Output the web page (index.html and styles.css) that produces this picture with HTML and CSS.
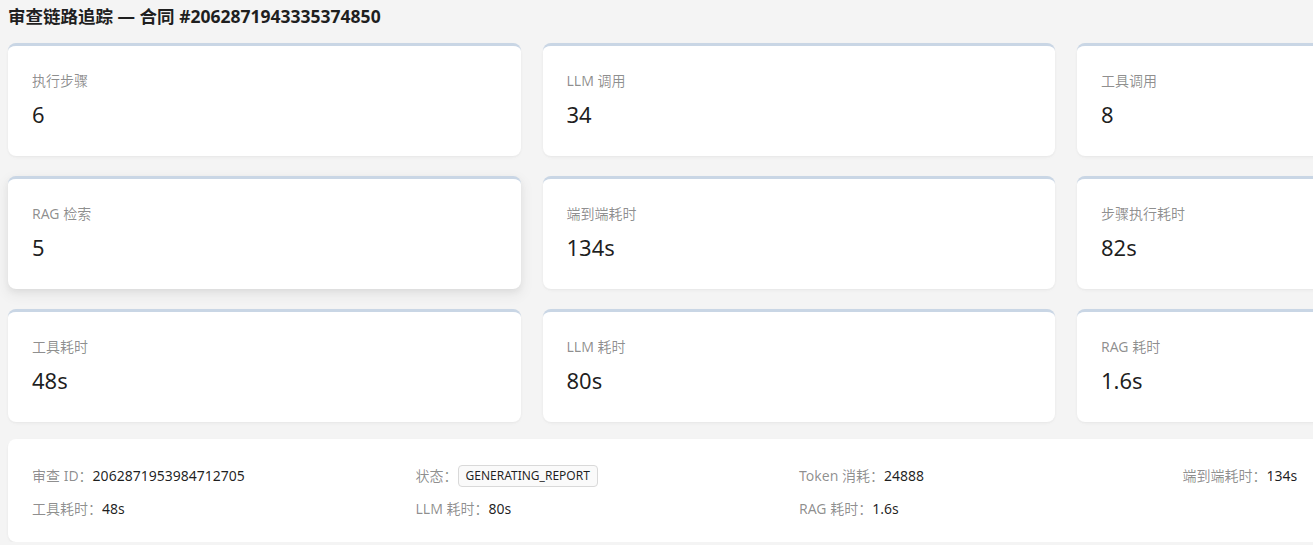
FILE: index.html
```html
<!DOCTYPE html>
<html lang="zh-CN">
<head>
    <meta charset="UTF-8">
    <title>审查链路追踪</title>
    <link rel="stylesheet" href="styles.css">
</head>
<body>
   <div id="page">
       <h1 class="page-title">审查链路追踪 — 合同 #2062871943335374850</h1>

       <div class="stat-grid">
           <div class="stat-card">
               <div class="stat-title">执行步骤</div>
               <div class="stat-value">6</div>
           </div>
           <div class="stat-card">
               <div class="stat-title">LLM 调用</div>
               <div class="stat-value">34</div>
           </div>
           <div class="stat-card">
               <div class="stat-title">工具调用</div>
               <div class="stat-value">8</div>
           </div>
           <div class="stat-card hover">
               <div class="stat-title">RAG 检索</div>
               <div class="stat-value">5</div>
           </div>
           <div class="stat-card">
               <div class="stat-title">端到端耗时</div>
               <div class="stat-value">134s</div>
           </div>
           <div class="stat-card">
               <div class="stat-title">步骤执行耗时</div>
               <div class="stat-value">82s</div>
           </div>
           <div class="stat-card">
               <div class="stat-title">工具耗时</div>
               <div class="stat-value">48s</div>
           </div>
           <div class="stat-card">
               <div class="stat-title">LLM 耗时</div>
               <div class="stat-value">80s</div>
           </div>
           <div class="stat-card">
               <div class="stat-title">RAG 耗时</div>
               <div class="stat-value">1.6s</div>
           </div>
       </div>

       <div class="detail-card">
           <ul class="desc">
               <li><span class="desc-label">审查 ID：</span><span class="desc-value">2062871953984712705</span></li>
               <li><span class="desc-label">状态：</span><span class="tag">GENERATING_REPORT</span></li>
               <li><span class="desc-label">Token 消耗：</span><span class="desc-value">24888</span></li>
               <li><span class="desc-label">端到端耗时：</span><span class="desc-value">134s</span></li>
               <li><span class="desc-label">工具耗时：</span><span class="desc-value">48s</span></li>
               <li><span class="desc-label">LLM 耗时：</span><span class="desc-value">80s</span></li>
               <li><span class="desc-label">RAG 耗时：</span><span class="desc-value">1.6s</span></li>
           </ul>
       </div>
   </div>
</body>
</html>
```

FILE: styles.css
```css
*{
    padding: 0;
    margin: 0;
    box-sizing: border-box;
}
ul{
    list-style: none;
}
html, body{
    background: #f4f4f4;
    overflow: hidden;
}
body{
    font-family: "Noto Sans", "Noto Sans CJK SC", sans-serif;
    color: rgba(0, 0, 0, 0.88);
    font-size: 14px;
}
#page{
    width: 1600px;
    padding: 4px 8px 0 8px;
}
.page-title{
    font-size: 17.5px;
    font-weight: 700;
    line-height: 24px;
    margin-bottom: 15px;
    color: #1f1f1f;
}
.stat-grid{
    display: grid;
    grid-template-columns: repeat(3, 512.5px);
    column-gap: 22px;
    row-gap: 20px;
}
.stat-card{
    height: 113px;
    background: #ffffff;
    border-top: 3px solid #c9d6e5;
    border-radius: 8px;
    padding: 24px;
    box-shadow: 0 1px 2px 0 rgba(0, 0, 0, 0.03), 0 1px 6px -1px rgba(0, 0, 0, 0.02), 0 2px 4px 0 rgba(0, 0, 0, 0.02);
}
.stat-card.hover{
    box-shadow: 0 1px 2px -2px rgba(0, 0, 0, 0.10), 0 3px 6px 0 rgba(0, 0, 0, 0.06), 0 5px 12px 4px rgba(0, 0, 0, 0.04);
}
.stat-title{
    font-size: 14px;
    line-height: 22px;
    color: rgba(0, 0, 0, 0.45);
    margin-bottom: 4px;
}
.stat-value{
    font-size: 22px;
    line-height: 36px;
    color: rgba(0, 0, 0, 0.88);
}
.detail-card{
    width: 1582px;
    margin-top: 17px;
    background: #ffffff;
    border-radius: 8px;
    padding: 26px 24px 22px 24px;
    box-shadow: 0 1px 2px 0 rgba(0, 0, 0, 0.03), 0 1px 6px -1px rgba(0, 0, 0, 0.02), 0 2px 4px 0 rgba(0, 0, 0, 0.02);
}
.desc{
    display: grid;
    grid-template-columns: repeat(4, 1fr);
    row-gap: 11px;
}
.desc li{
    display: flex;
    align-items: center;
    height: 22px;
    line-height: 22px;
}
.desc-label{
    color: rgba(0, 0, 0, 0.45);
}
.desc-value{
    color: rgba(0, 0, 0, 0.88);
}
.tag{
    display: inline-block;
    height: 22px;
    line-height: 20px;
    padding: 0 7px;
    font-size: 12px;
    background: #fafafa;
    border: 1px solid #d9d9d9;
    border-radius: 4px;
    color: rgba(0, 0, 0, 0.88);
}
```
